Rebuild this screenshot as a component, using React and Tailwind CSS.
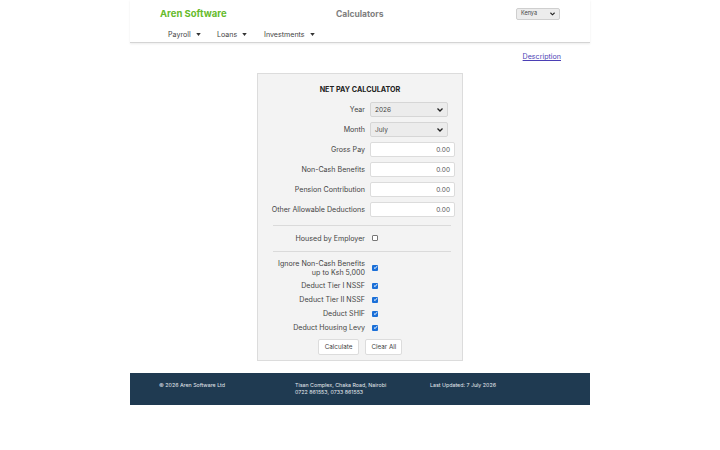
import React from 'react';

const Caret = () => (
  <svg width="5" height="3" viewBox="0 0 6 4" className="ml-[5px] inline-block">
    <path d="M0 0 L6 0 L3 4 Z" fill="#333" />
  </svg>
);

const SelectBox = ({ value }) => (
  <div className="w-[78px] h-[15px] flex items-center justify-between bg-[#ececec] border border-[#d6d6d6] rounded-[2px] px-[4px] text-[6.5px] leading-none text-[#444]">
    <span>{value}</span>
    <svg width="6" height="4" viewBox="0 0 6 4"><path d="M0.5 0.5 L3 3 L5.5 0.5" stroke="#222" strokeWidth="1.3" fill="none" /></svg>
  </div>
);

const NumInput = () => (
  <div className="w-[85px] h-[15px] flex items-center justify-end bg-white border border-[#dcdcdc] rounded-[2px] px-[4px] text-[6.5px] leading-none text-[#555]">
    0.00
  </div>
);

const Check = ({ on }) =>
  on ? (
    <div className="ml-[2px] w-[6px] h-[6px] rounded-[1px] bg-[#1a6fd8] flex items-center justify-center">
      <svg width="5" height="5" viewBox="0 0 5 5"><path d="M1 2.6 L2.1 3.6 L4 1.2" stroke="#fff" strokeWidth="1" fill="none" /></svg>
    </div>
  ) : (
    <div className="ml-[2px] w-[6px] h-[6px] rounded-[1px] bg-white border border-[#777]" />
  );

const Row = ({ label, children }) => (
  <div className="flex items-center h-[20px]">
    <div className="w-[108px] text-right pr-[5px] text-[7.1px] text-[#444] leading-[9px]">{label}</div>
    {children}
  </div>
);

const CheckRow = ({ label, on, h = 'h-[14px]' }) => (
  <div className={`flex items-center ${h}`}>
    <div className="w-[108px] text-right pr-[5px] text-[7.1px] text-[#444] leading-[9px]">{label}</div>
    <Check on={on} />
  </div>
);

const App = () => {
  return (
    <div className="w-[720px] h-[450px] bg-white font-['Inter','Liberation_Sans',sans-serif]">
      <div className="w-[460px] mx-auto">
        {/* Header */}
        <div className="h-[43px] border-b border-[#d4d4d4] shadow-[0_1px_2px_rgba(0,0,0,0.08)]">
          <div className="flex items-center h-[28px] pl-[30px] pr-[30px]">
            <div className="w-[176px] text-[9.5px] font-bold text-[#66bb2b]">Aren Software</div>
            <div className="flex-1 text-[8.5px] font-bold text-[#808080]">Calculators</div>
            <div className="w-[44px] h-[12px] flex items-center justify-between bg-[#ececec] border border-[#cfcfcf] rounded-[2px] px-[4px] text-[5.5px] leading-none text-[#444]">
              <span>Kenya</span>
              <svg width="5" height="4" viewBox="0 0 6 4"><path d="M0.5 0.5 L3 3 L5.5 0.5" stroke="#222" strokeWidth="1.3" fill="none" /></svg>
            </div>
          </div>
          <div className="flex items-center h-[14px] pl-[38px] text-[7.1px] text-[#444]">
            <span className="flex items-center w-[49px]">Payroll<Caret /></span>
            <span className="flex items-center w-[47px]">Loans<Caret /></span>
            <span className="flex items-center">Investments<Caret /></span>
          </div>
        </div>

        {/* Description link */}
        <div className="flex justify-end pr-[29px] pt-[9px] h-[30px]">
          <span className="text-[7.1px] text-[#4b3fb5] underline">Description</span>
        </div>

        {/* Card */}
        <div className="w-[206px] mx-auto bg-[#f3f3f3] border border-[#dcdcdc] pt-[11px] pb-[5px] pl-[4px]">
          <div className="text-center text-[7.2px] font-bold text-[#222] mb-[4px] pr-[4px]">NET PAY CALCULATOR</div>
          <Row label="Year"><SelectBox value="2026" /></Row>
          <Row label="Month"><SelectBox value="July" /></Row>
          <Row label="Gross Pay"><NumInput /></Row>
          <Row label="Non-Cash Benefits"><NumInput /></Row>
          <Row label="Pension Contribution"><NumInput /></Row>
          <Row label="Other Allowable Deductions"><NumInput /></Row>
          <div className="mx-[11px] mt-[5px] border-t border-[#dadada]" />
          <CheckRow label="Housed by Employer" on={false} h="h-[25px]" />
          <div className="mx-[11px] border-t border-[#dadada]" />
          <div className="flex items-center h-[22px] mt-[5px]">
            <div className="w-[108px] text-right pr-[5px] text-[7.1px] text-[#444] leading-[9px]">
              Ignore Non-Cash Benefits<br />up to Ksh 5,000
            </div>
            <Check on />
          </div>
          <CheckRow label="Deduct Tier I NSSF" on />
          <CheckRow label="Deduct Tier II NSSF" on />
          <CheckRow label="Deduct SHIF" on />
          <CheckRow label="Deduct Housing Levy" on />
          <div className="flex justify-center gap-[6px] mt-[4px] pr-[4px]">
            <div className="h-[16px] px-[6px] flex items-center bg-white border border-[#dcdcdc] rounded-[2px] text-[6.3px] leading-none text-[#444]">Calculate</div>
            <div className="h-[16px] px-[5px] flex items-center bg-white border border-[#dcdcdc] rounded-[2px] text-[6.3px] leading-none text-[#444]">Clear All</div>
          </div>
        </div>

        {/* Footer */}
        <div className="mt-[12px] h-[32px] bg-[#1f3a51] flex pl-[29px] pt-[9px] text-[5.3px] text-[#e5e9ee] leading-[7px]">
          <div className="w-[136px]">© 2026 Aren Software Ltd</div>
          <div className="w-[135px]">Tisan Complex, Chaka Road, Nairobi<br />0722 861553, 0733 861553</div>
          <div>Last Updated: 7 July 2026</div>
        </div>
      </div>
    </div>
  );
};

export default App;
